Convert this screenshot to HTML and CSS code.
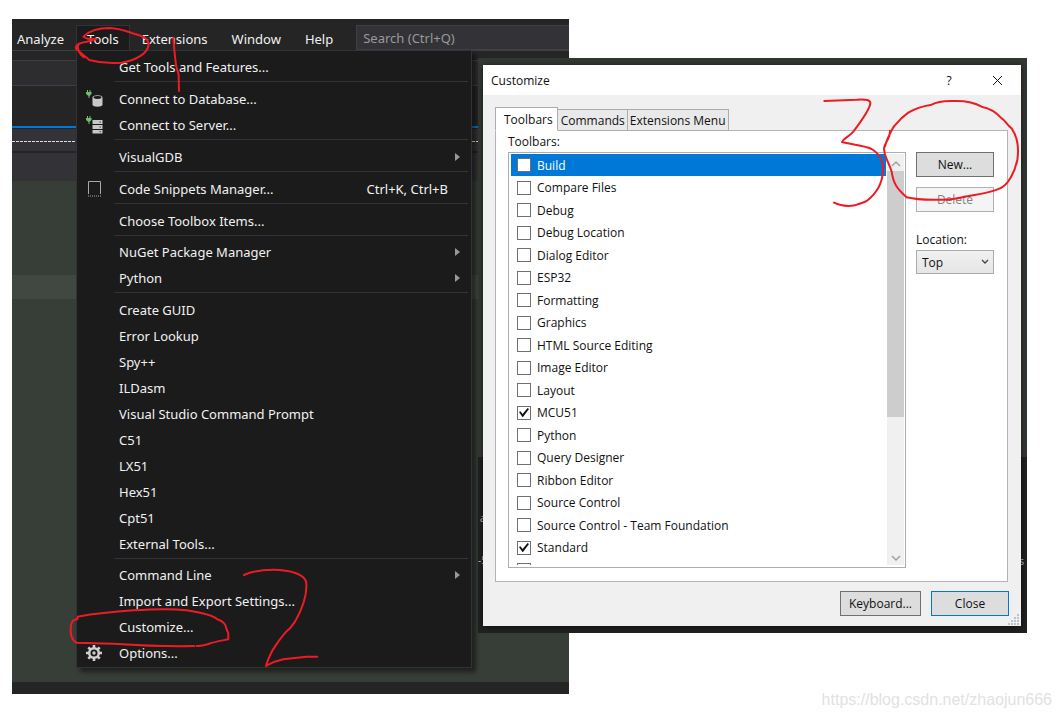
FILE: index.html
```html
<!DOCTYPE html>
<html lang="en">
<head>
<meta charset="utf-8">
<title>Customize toolbars</title>
<link rel="stylesheet" href="styles.css">
</head>
<body>
<main class="desktop">
  <section class="ide">
    <nav class="menubar">
      <button class="menu-title first">Analyze</button>
      <button class="menu-title open">Tools</button>
      <button class="menu-title">Extensions</button>
      <button class="menu-title">Window</button>
      <button class="menu-title">Help</button>
      <input class="search" type="text" placeholder="Search (Ctrl+Q)" aria-label="Search">
    </nav>
    <div class="strip gap-bar"></div>
    <div class="strip tool-bar"></div>
    <div class="strip tab-well"></div>
    <div class="strip grip-bar"><span class="dashes"></span></div>
    <div class="strip nav-bar"></div>
    <div class="editor"><div class="current-line"></div></div>
    <div class="strip status"></div>

    <div class="dropdown" role="menu">
      <button class="item" role="menuitem"><span class="icon"></span><span class="label">Get Tools and Features...</span></button>
      <hr class="sep">
      <button class="item" role="menuitem"><span class="icon">
        <svg width="18" height="18" viewBox="0 0 18 18"><path fill="#6fbf6f" d="M2 0h1v2h1.500V0h1v2h1v2L4.500 6v2h-1V6L1 4V2h1z"/><path fill="#c8c8c8" d="M7.500 7.500c0-3 10-3 10 0v7c0 3-10 3-10 0z"/><ellipse cx="12.500" cy="7.500" rx="4" ry="1.400" fill="#1b1b1c"/></svg>
      </span><span class="label">Connect to Database...</span></button>
      <button class="item" role="menuitem"><span class="icon">
        <svg width="18" height="18" viewBox="0 0 18 18"><path fill="#6fbf6f" d="M2 0h1v2h1.500V0h1v2h1v2L4.500 6v2h-1V6L1 4V2h1z"/><path fill="#c8c8c8" d="M7.500 4h10v4h-10zM7.500 9h10v4h-10zM7.500 14h10v3.500h-10z"/><path stroke="#1b1b1c" stroke-width=".8" d="M14.500 6h1.500M14.500 11h1.500M14.500 15.700h1.500"/></svg>
      </span><span class="label">Connect to Server...</span></button>
      <hr class="sep">
      <button class="item" role="menuitem"><span class="icon"></span><span class="label">VisualGDB</span><span class="arrow"></span></button>
      <hr class="sep">
      <button class="item" role="menuitem"><span class="icon">
        <svg width="18" height="18" viewBox="0 0 18 18"><path fill="none" stroke="#a8a8a8" d="M3.500 14V1.500h12V14"/><path stroke="#a8a8a8" stroke-dasharray="1 1" d="M3 16h14"/></svg>
      </span><span class="label">Code Snippets Manager...</span><span class="shortcut">Ctrl+K, Ctrl+B</span></button>
      <hr class="sep">
      <button class="item" role="menuitem"><span class="icon"></span><span class="label">Choose Toolbox Items...</span></button>
      <hr class="sep tight">
      <button class="item" role="menuitem"><span class="icon"></span><span class="label">NuGet Package Manager</span><span class="arrow"></span></button>
      <button class="item" role="menuitem"><span class="icon"></span><span class="label">Python</span><span class="arrow"></span></button>
      <hr class="sep">
      <button class="item" role="menuitem"><span class="icon"></span><span class="label">Create GUID</span></button>
      <button class="item" role="menuitem"><span class="icon"></span><span class="label">Error Lookup</span></button>
      <button class="item" role="menuitem"><span class="icon"></span><span class="label">Spy++</span></button>
      <button class="item" role="menuitem"><span class="icon"></span><span class="label">ILDasm</span></button>
      <button class="item" role="menuitem"><span class="icon"></span><span class="label">Visual Studio Command Prompt</span></button>
      <button class="item" role="menuitem"><span class="icon"></span><span class="label">C51</span></button>
      <button class="item" role="menuitem"><span class="icon"></span><span class="label">LX51</span></button>
      <button class="item" role="menuitem"><span class="icon"></span><span class="label">Hex51</span></button>
      <button class="item" role="menuitem"><span class="icon"></span><span class="label">Cpt51</span></button>
      <button class="item" role="menuitem"><span class="icon"></span><span class="label">External Tools...</span></button>
      <hr class="sep tight">
      <button class="item" role="menuitem"><span class="icon"></span><span class="label">Command Line</span><span class="arrow"></span></button>
      <button class="item" role="menuitem"><span class="icon"></span><span class="label">Import and Export Settings...</span></button>
      <button class="item" role="menuitem"><span class="icon"></span><span class="label">Customize...</span></button>
      <button class="item" role="menuitem"><span class="icon">
        <svg width="18" height="18" viewBox="0 0 18 18"><g fill="none" stroke="#d0d0d0"><circle cx="9" cy="9" r="4.800" stroke-width="2.500"/><circle cx="9" cy="9" r="1" stroke-width="1.400"/><path stroke-width="2.600" d="M9 1v3M9 14v3M1 9h3M14 9h3M3.300 3.300l2.200 2.200M12.500 12.500l2.200 2.200M14.700 3.300l-2.200 2.200M5.500 12.500l-2.200 2.200"/></g></svg>
      </span><span class="label">Options...</span></button>
    </div>
  </section>

  <section class="backdrop">
    <span class="log log-a">a</span><span class="log log-b">-5</span><span class="log log-c">s</span>
    <div class="dialog" role="dialog" aria-labelledby="dialog-title">
      <header class="titlebar">
        <h1 class="title" id="dialog-title">Customize</h1>
        <button class="caption">?</button>
        <button class="caption" aria-label="Close window"><svg width="11" height="11" viewBox="0 0 11 11"><path stroke="#111" d="M1 1l9 9M10 1l-9 9"/></svg></button>
      </header>
      <div class="body">
        <div class="tabs" role="tablist">
          <button class="tab active" role="tab">Toolbars</button>
          <button class="tab" role="tab">Commands</button>
          <button class="tab" role="tab">Extensions Menu</button>
        </div>
        <div class="panel">
          <div class="list-side">
            <span class="caption-text">Toolbars:</span>
            <div class="listbox">
              <div class="rows">
                <label class="row selected"><input type="checkbox">Build</label>
                <label class="row"><input type="checkbox">Compare Files</label>
                <label class="row"><input type="checkbox">Debug</label>
                <label class="row"><input type="checkbox">Debug Location</label>
                <label class="row"><input type="checkbox">Dialog Editor</label>
                <label class="row"><input type="checkbox">ESP32</label>
                <label class="row"><input type="checkbox">Formatting</label>
                <label class="row"><input type="checkbox">Graphics</label>
                <label class="row"><input type="checkbox">HTML Source Editing</label>
                <label class="row"><input type="checkbox">Image Editor</label>
                <label class="row"><input type="checkbox">Layout</label>
                <label class="row"><input type="checkbox" checked>MCU51</label>
                <label class="row"><input type="checkbox">Python</label>
                <label class="row"><input type="checkbox">Query Designer</label>
                <label class="row"><input type="checkbox">Ribbon Editor</label>
                <label class="row"><input type="checkbox">Source Control</label>
                <label class="row"><input type="checkbox">Source Control - Team Foundation</label>
                <label class="row"><input type="checkbox" checked>Standard</label>
                <label class="row"><input type="checkbox" aria-label="Next toolbar"></label>
              </div>
              <div class="scrollbar">
                <svg width="17" height="17" viewBox="0 0 17 17"><path fill="none" stroke="#a0a0a0" stroke-width="1.500" d="M5 12l4-4 4 4"/></svg>
                <span class="thumb"></span>
                <span class="track"></span>
                <svg width="17" height="17" viewBox="0 0 17 17"><path fill="none" stroke="#a0a0a0" stroke-width="1.500" d="M5 8l4 4 4-4"/></svg>
              </div>
            </div>
          </div>
          <div class="actions">
            <button class="button">New...</button>
            <button class="button" disabled>Delete</button>
            <label class="location" for="location">Location:</label>
            <div class="select-wrap">
              <select class="select" id="location"><option>Top</option></select>
              <svg class="chevron" width="8" height="6" viewBox="0 0 8 6"><path fill="none" stroke="#444" stroke-width="1.300" d="M1 1l3 3 3-3"/></svg>
            </div>
          </div>
        </div>
        <footer class="footer">
          <button class="button keyboard">Keyboard...</button>
          <button class="button default">Close</button>
        </footer>
      </div>
      <svg class="grip" width="12" height="12" viewBox="0 0 12 12"><path stroke="#bcc2d4" stroke-width="2" stroke-dasharray="2 1" d="M0 11h12M3 8h9M6 5h6M9 2h3"/></svg>
    </div>
  </section>

  <svg class="ink" width="1061" height="718" viewBox="0 0 1061 718" aria-hidden="true">
    <g fill="none" stroke="#ed1c24" stroke-width="6" stroke-linecap="round" stroke-linejoin="round">
      <g transform="translate(0 10) scale(.3333)">
        <path d="M290 87L262 86L250 80C262 68 285 54 330 54C365 56 390 68 405 72C430 78 446 88 446 103C444 130 410 150 365 158C325 162 290 156 268 150C260 142 240 128 228 116C224 104 245 97 260 95L290 87M236 101C230 112 236 132 252 142"/>
        <path d="M520 83L524 130L528 165L536 195L537 243"/>
      </g>
      <g transform="translate(0 530) scale(.3333)">
        <path d="M732 135C760 122 800 118 840 120C890 124 918 140 919 160C922 200 905 240 885 275L870 295C850 310 835 335 818 360C808 380 800 400 798 408C815 398 830 392 850 388L920 380L952 380"/>
        <path d="M583 348C500 350 400 345 340 341L230 338C215 332 210 310 213 285C216 272 222 268 232 268L233 260C290 250 340 245 400 241C480 236 530 237 560 241C600 247 640 258 652 268C665 272 678 282 680 298L685 310L685 328C665 332 640 336 625 342C610 347 600 349 590 348"/>
      </g>
      <g transform="translate(760 50) scale(.3333)">
        <path d="M193 153L290 149C320 147 332 150 331 160C330 175 310 205 280 245C265 262 250 265 246 276C270 283 310 285 335 297C360 312 370 330 369 360C368 400 350 430 320 453C300 462 290 463 285 466C265 470 240 467 222 458"/>
        <path d="M390 242C392 265 375 275 372 295C372 320 388 340 395 365C400 400 410 415 440 442C480 452 560 452 600 443C650 433 690 430 720 415C745 405 765 365 772 330C778 290 772 260 755 235C740 225 735 210 725 205C712 190 690 175 665 170C640 155 610 152 580 153C540 152 525 158 515 164C490 168 470 172 445 188C420 205 410 220 400 232C390 250 378 275 375 290"/>
      </g>
    </g>
  </svg>
  <span class="watermark">https://blog.csdn.net/zhaojun666</span>
</main>
</body>
</html>
```
FILE: styles.css
```css
* { box-sizing: border-box; }
body { margin: 0; background: #fff; }
button, input, select { font: inherit; color: inherit; margin: 0; }
button { background: none; border: 0; padding: 0; white-space: nowrap; }

.desktop {
  position: relative;
  min-height: 100vh;
  overflow: hidden;
  font-family: "Open Sans", "Noto Sans", sans-serif;
  font-size: 12px;
}

/* Editor window */
.ide {
  position: absolute;
  left: 12px;
  top: 19px;
  width: 557px;
  height: 675px;
  display: flex;
  flex-direction: column;
  background: #252526;
  color: #f1f1f1;
  font-family: "Noto Sans", "Open Sans", sans-serif;
  font-size: 13px;
}
.menubar { display: flex; height: 31px; padding-top: 6px; flex: none; }
.menu-title { padding: 0 12px; height: 28px; }
.menu-title.first { padding: 0 12px 0 5px; }
.menu-title.open { background: #1b1b1c; border: solid #333337; border-width: 0 1px; padding: 0 10px; box-shadow: inset 0 1px #333337; }
.search {
  flex: 1;
  min-width: 0;
  height: 25px;
  margin-left: 11px;
  padding: 0 6px;
  background: #333337;
  border: 1px solid #3f3f46;
  border-right: 0;
}
.search::placeholder { color: #999; opacity: 1; }

.strip { flex: none; }
.gap-bar { height: 10px; border-top: 1px solid #3f3f46; }
.tool-bar { height: 26px; background: #2d2d30; border: solid #3f3f46; border-width: 1px 0; }
.tab-well { height: 42px; border-bottom: 2px solid #0078d7; }
.grip-bar { height: 25px; background: #333337; border: solid #252526; border-width: 1px 0 2px; padding-top: 12px; }
.dashes { display: block; height: 1px; background: repeating-linear-gradient(90deg, #e0e0e0 0 3px, transparent 3px 4px); }
.nav-bar { height: 28px; background: #333337; }
.editor { flex: 1; background: #373d37; padding-top: 94px; }
.current-line { height: 24px; background: #414741; }
.status { height: 12px; background: #252526; }

.dropdown {
  position: absolute;
  left: 64px;
  top: 31px;
  width: 396px;
  padding: 3px 0 1px;
  background: #1b1b1c;
  border: 1px solid #333337;
  box-shadow: 4px 4px 4px rgba(0, 0, 0, .45);
}
.item { display: flex; align-items: center; width: 100%; height: 26px; text-align: left; }
.icon { width: 34px; padding-left: 8px; margin-right: 8px; display: flex; }
.label { flex: 1; }
.shortcut { margin-right: 23px; }
.arrow { margin-right: 11px; border: solid transparent; border-width: 4px 0 4px 5px; border-left-color: #999; }
.sep { margin: 1px 3px 4px 37px; border: 0; height: 1px; background: #333337; }
.sep.tight { margin-bottom: 3px; }

/* Dialog over its dark surroundings */
.backdrop {
  position: absolute;
  left: 478px;
  top: 58px;
  width: 549px;
  padding: 7px 6px 7px 5px;
  background: linear-gradient(#323832 0 399px, #212121 399px);
  color: #111;
}
.log { position: absolute; color: #ccc; font-size: 10px; line-height: 12px; }
.log-a { left: 2px; top: 454px; }
.log-b { left: 0; top: 496px; }
.log-c { right: 3px; top: 497px; }
.dialog { position: relative; background: #f0f0f0; box-shadow: 0 1px 6px rgba(0, 0, 0, .6); }
.titlebar { display: flex; align-items: center; height: 30px; background: #fff; padding-left: 8px; }
.title { flex: 1; margin: 0; font-size: 12px; font-weight: 400; }
.caption { width: 48px; height: 30px; display: grid; place-items: center; }
.body { padding: 12px 12px 10px; }
.tabs { display: flex; align-items: flex-end; height: 24px; margin-bottom: -1px; position: relative; }
.tab { height: 22px; padding: 0 2px; margin-right: -1px; background: #e9e9e9; border: 1px solid #acacac; }
.tab.active { height: 24px; padding: 0 4px 0 8px; margin-right: 0; background: #fff; border-bottom-color: #fff; }
.tab.active + .tab { border-left: 0; padding-left: 3px; }
.panel {
  display: flex;
  gap: 10px;
  margin-right: 1px;
  padding: 1px 13px 13px 12px;
  background: #fff;
  border: 1px solid #b4b4b4;
}
.list-side { flex: 1; }
.caption-text { display: block; line-height: 20px; }
.listbox { display: flex; height: 416px; padding: 1px 1px 2px 2px; border: 1px solid #abadb3; }
.rows { flex: 1; display: grid; grid-auto-rows: 22px 23px; overflow: hidden; align-content: start; }
.row { display: flex; align-items: center; gap: 6px; padding-left: 6px; }
.row.selected { background: #0078d7; color: #fff; }
.row input {
  appearance: none;
  width: 14px;
  height: 14px;
  flex: none;
  background: #fff;
  border: 1px solid #707070;
  display: grid;
  place-items: center;
}
.row input:checked::before {
  content: "";
  width: 10px;
  height: 9px;
  background: #111;
  clip-path: polygon(0 45%, 14% 36%, 36% 66%, 86% 0, 100% 12%, 40% 100%, 34% 100%);
}
.scrollbar { display: flex; flex-direction: column; width: 17px; background: #f0f0f0; margin-left: 1px; }
.scrollbar svg { flex: none; }
.thumb { flex: 247; background: #cdcdcd; }
.track { flex: 131; }
.actions { display: flex; flex-direction: column; width: 78px; padding-top: 20px; }
.button { height: 25px; background: #ddd; border: 1px solid #707070; }
.button:disabled { margin-top: 10px; background: #f4f4f4; border-color: #adb2b5; color: #838383; }
.location { line-height: 18px; margin: 19px 0 1px; }
.select-wrap { display: grid; align-items: center; }
.select { appearance: none; grid-area: 1 / 1; height: 24px; padding: 0 5px; background: linear-gradient(#f0f0f0, #e5e5e5); border: 1px solid #acacac; border-radius: 0; }
.chevron { grid-area: 1 / 1; justify-self: end; margin-right: 5px; pointer-events: none; }
.footer { display: flex; justify-content: flex-end; gap: 10px; padding-top: 9px; }
.footer .button { width: 78px; }
.footer .keyboard { width: 81px; }
.footer .default { border-color: #0078d7; }
.grip { position: absolute; right: 1px; bottom: 1px; }

.ink { position: absolute; left: 0; top: 0; pointer-events: none; }
.watermark {
  position: absolute;
  right: 9px;
  bottom: 8px;
  font-family: "Liberation Sans", Arial, sans-serif;
  font-size: 16px;
  line-height: 20px;
  color: #e2e2e2;
}
```
